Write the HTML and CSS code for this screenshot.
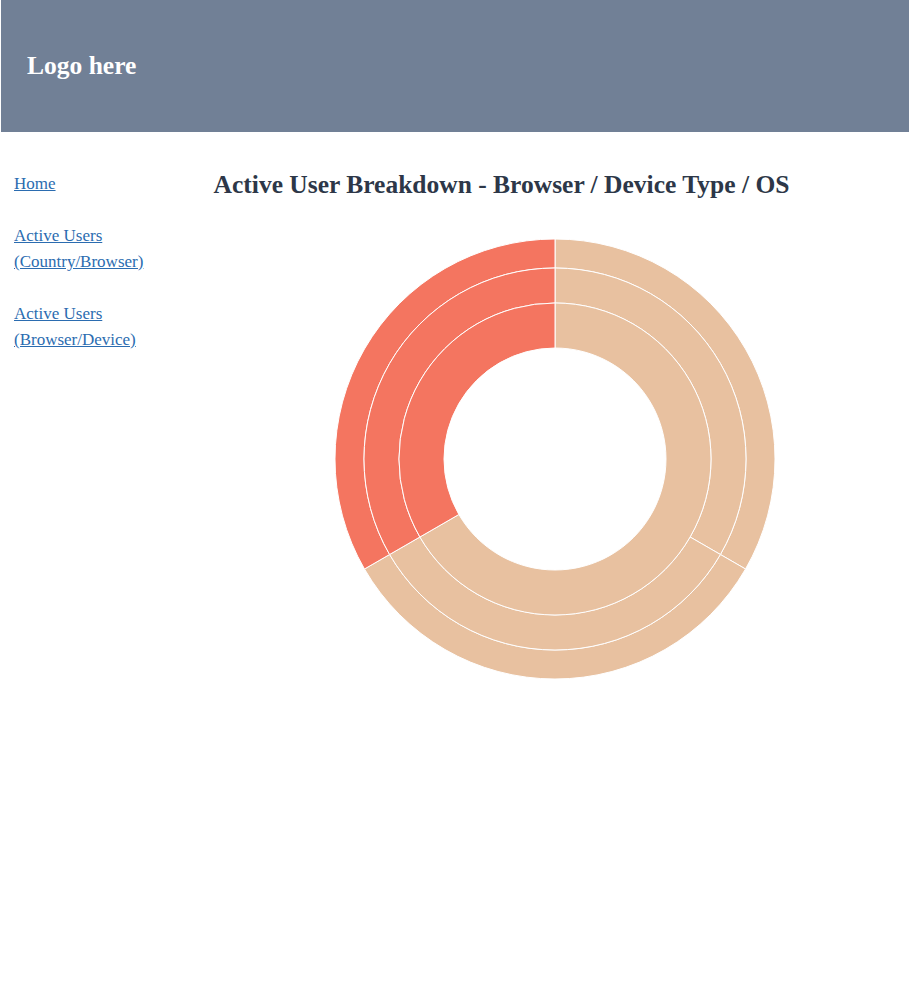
FILE: index.html
```html
<!DOCTYPE html>
<html lang="en">
<head>
<meta charset="utf-8">
<title>Active User Breakdown</title>
<link rel="stylesheet" href="styles.css">
</head>
<body>
<header class="topbar">
  <div class="logo">Logo here</div>
</header>
<div class="layout">
  <nav class="sidebar">
    <a class="nav-link" href="#">Home</a>
    <a class="nav-link" href="#">Active Users (Country/Browser)</a>
    <a class="nav-link" href="#">Active Users (Browser/Device)</a>
  </nav>
  <main class="content">
    <h1 class="title">Active User Breakdown - Browser / Device Type / OS</h1>
    <div class="chart">
      <svg width="460" height="460" viewBox="0 0 460 460">
        <g stroke="#ffffff" stroke-width="1">
          <path fill="#e8c1a0" d="M230,10 A220,220 0 0 1 420.53,340 L395.41,325.5 A191,191 0 0 0 230,39 Z"/>
          <path fill="#e8c1a0" d="M420.53,340 A220,220 0 0 1 39.47,340 L64.59,325.5 A191,191 0 0 0 395.41,325.5 Z"/>
          <path fill="#f47560" d="M39.47,340 A220,220 0 0 1 230,10 L230,39 A191,191 0 0 0 64.59,325.5 Z"/>
          <path fill="#e8c1a0" d="M230,39 A191,191 0 0 1 395.41,325.5 L365.10,308 A156,156 0 0 0 230,74 Z"/>
          <path fill="#e8c1a0" d="M395.41,325.5 A191,191 0 0 1 64.59,325.5 L94.90,308 A156,156 0 0 0 365.10,308 Z"/>
          <path fill="#f47560" d="M64.59,325.5 A191,191 0 0 1 230,39 L230,74 A156,156 0 0 0 94.90,308 Z"/>
          <path fill="#e8c1a0" d="M230,74 A156,156 0 1 1 94.90,308 L133.87,285.5 A111,111 0 1 0 230,119 Z"/>
          <path fill="#f47560" d="M94.90,308 A156,156 0 0 1 230,74 L230,119 A111,111 0 0 0 133.87,285.5 Z"/>
        </g>
      </svg>
    </div>
  </main>
</div>
</body>
</html>
```

FILE: styles.css
```css
* { box-sizing: border-box; }
html, body {
  margin: 0;
  padding: 0;
  background: #ffffff;
  font-family: "Liberation Serif", "Times New Roman", serif;
}
.topbar {
  margin: 0 1px;
  height: 132px;
  background: #718096;
  display: flex;
  align-items: center;
  padding: 0 0 1px 26px;
}
.logo {
  color: #ffffff;
  font-weight: bold;
  font-size: 25.5px;
  line-height: 1;
}
.layout {
  display: flex;
}
.sidebar {
  width: 170px;
  flex: none;
  padding: 39px 0 0 14px;
  display: flex;
  flex-direction: column;
  gap: 26px;
}
.nav-link {
  color: #2b6cb0;
  font-size: 17px;
  line-height: 26px;
  text-decoration: underline;
  width: 140px;
}
.content {
  flex: 1;
  display: flex;
  flex-direction: column;
  padding-right: 77px;
}
.title {
  margin: 38px 0 0;
  text-align: center;
  font-size: 25.5px;
  line-height: 30px;
  font-weight: bold;
  color: #2d3748;
}
.chart {
  margin: 29px 0 0 155px;
  line-height: 0;
}
.chart svg { display: block; }
```
